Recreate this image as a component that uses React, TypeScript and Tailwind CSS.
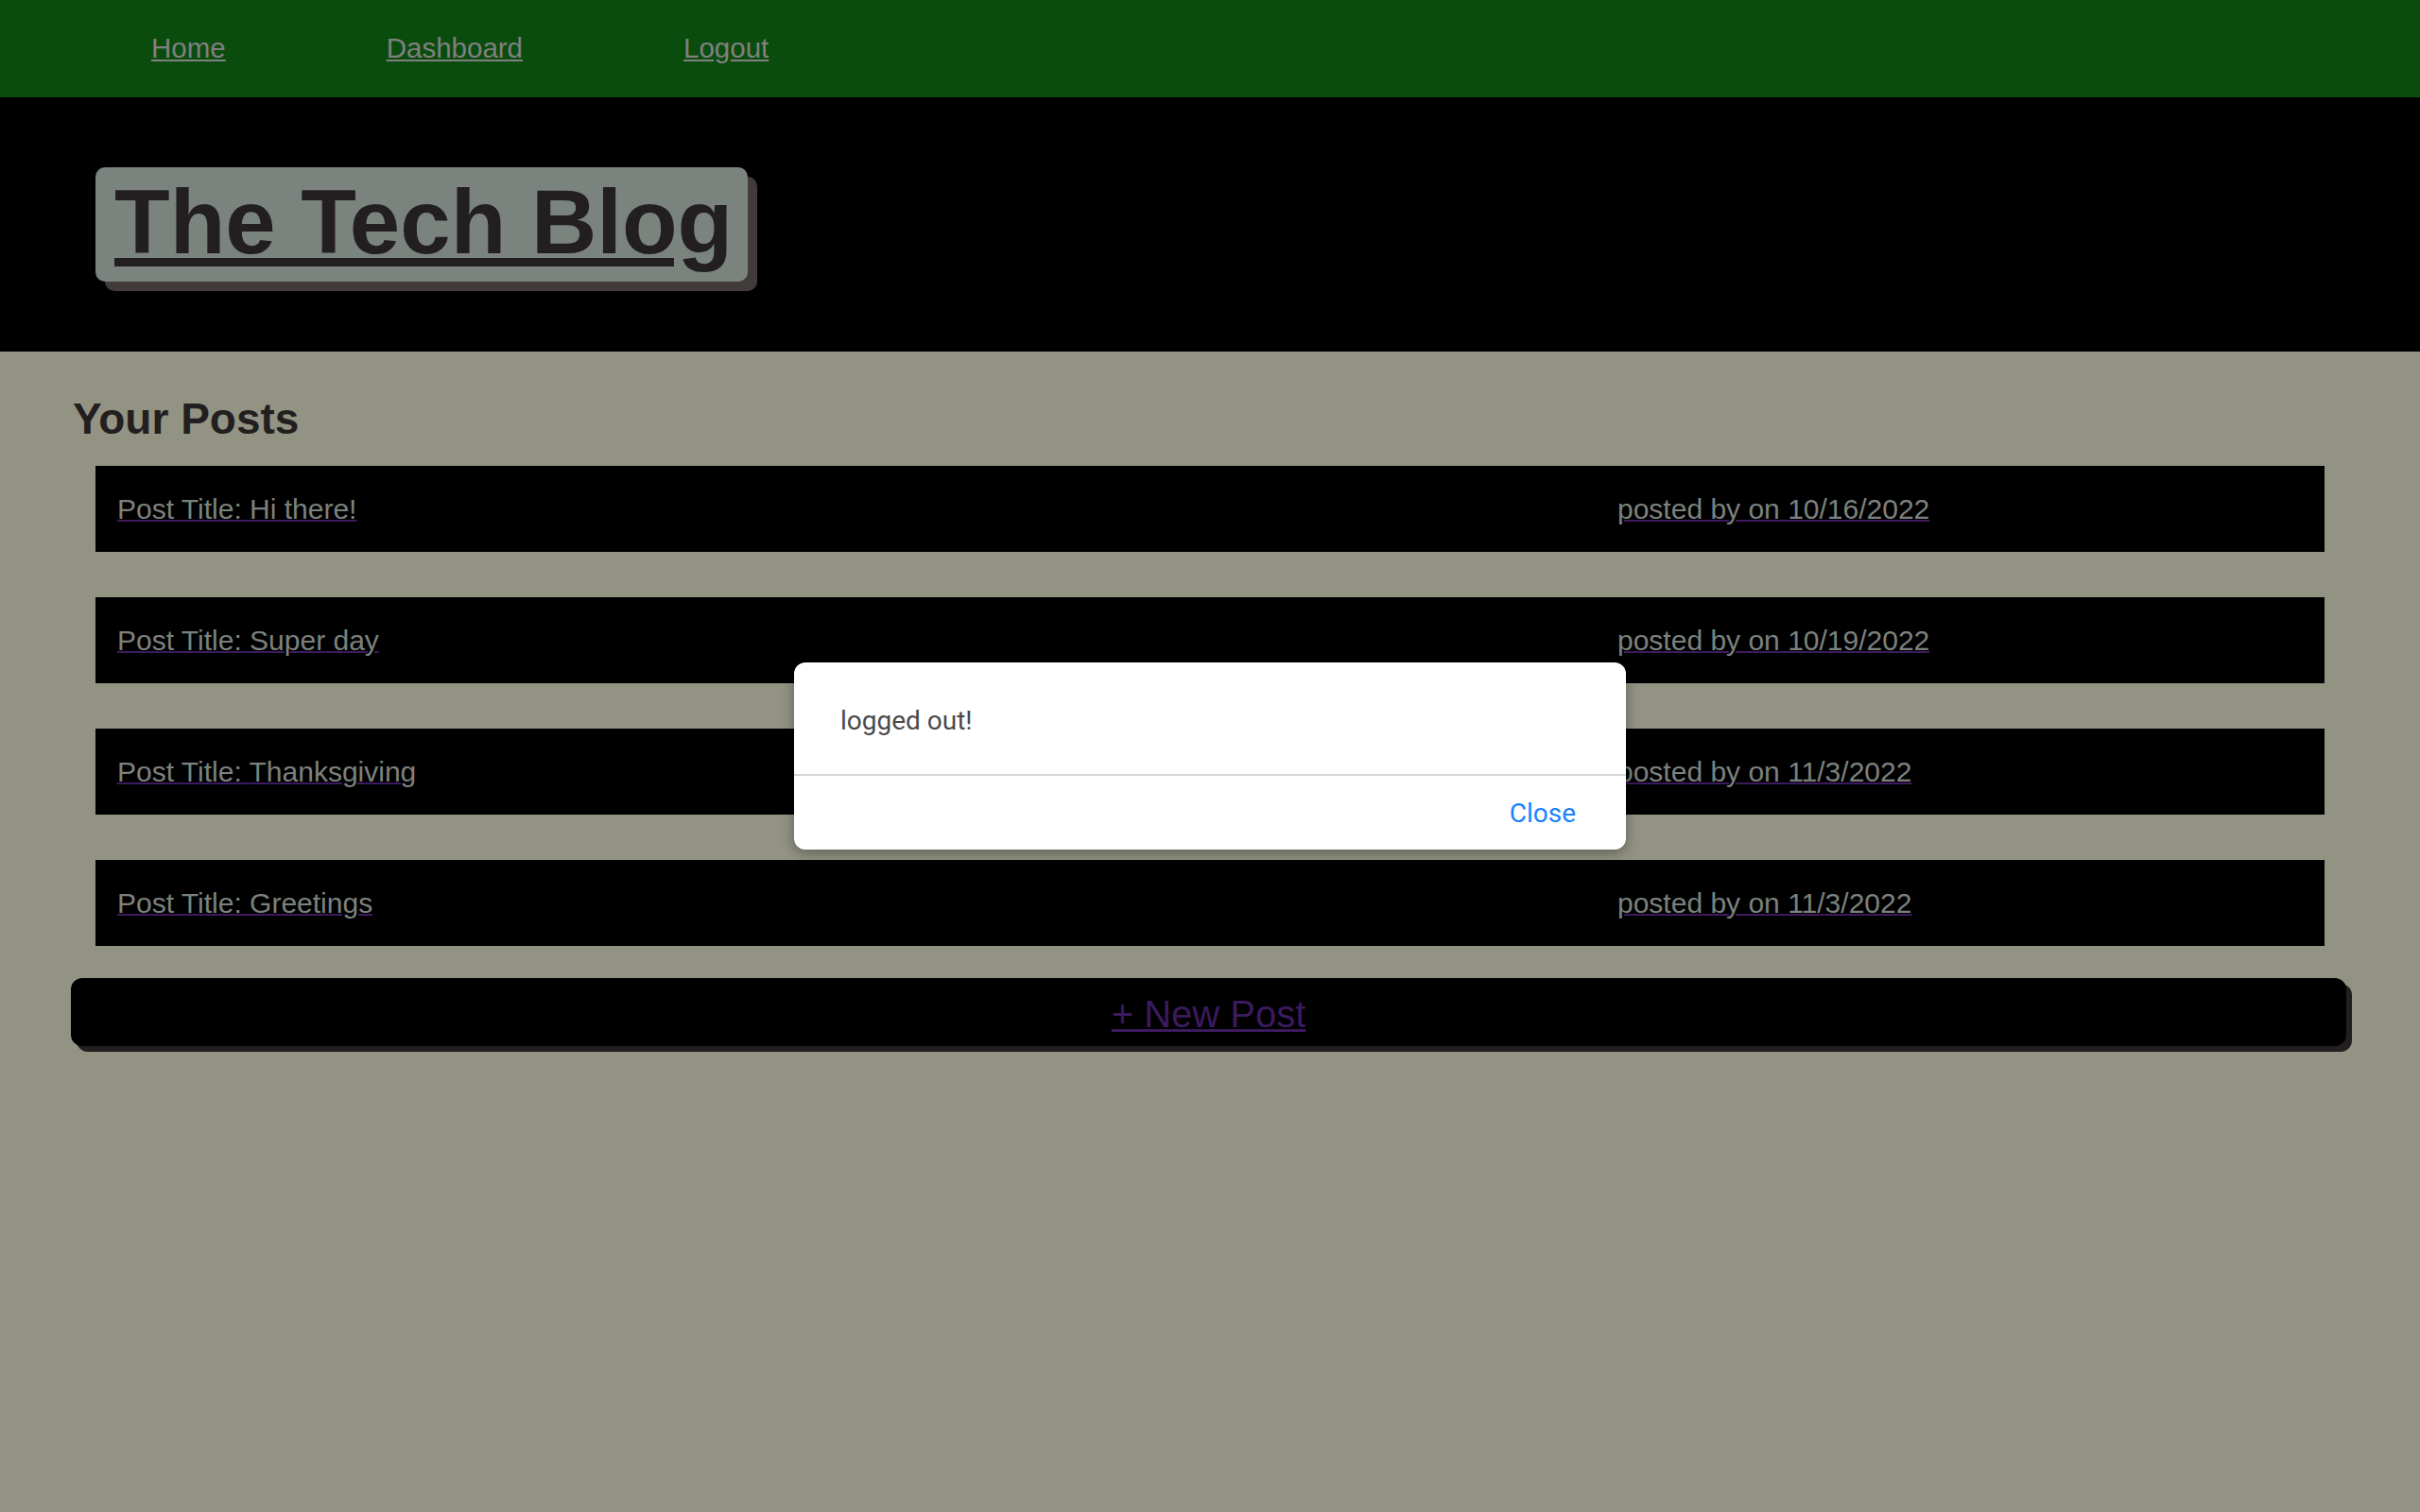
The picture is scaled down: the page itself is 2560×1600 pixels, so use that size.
import React from "react";

const posts = [
  { title: "Hi there!", date: "10/16/2022" },
  { title: "Super day", date: "10/19/2022" },
  { title: "Thanksgiving", date: "11/3/2022" },
  { title: "Greetings", date: "11/3/2022" },
];

export default function App() {
  return (
    <div className="relative min-h-[1600px] bg-[#929383] font-['Liberation_Sans',Arial,sans-serif]">
      {/* nav */}
      <nav className="h-[103px] bg-[#0a4c0e] flex items-center pl-[160px] gap-[170px] text-[29.5px] text-[#808080]">
        <a href="#" className="underline">Home</a>
        <a href="#" className="underline">Dashboard</a>
        <a href="#" className="underline">Logout</a>
      </nav>

      {/* header */}
      <header className="h-[269px] bg-black flex items-center pl-[101px]">
        <div className="bg-[#7a837e] rounded-[10px] shadow-[10px_10px_0_#413b3b] pl-[20px] pr-[16px] pt-[3px] pb-[9px]">
          <a href="#" className="block text-[96px] leading-[109px] font-bold text-[#231f20] underline">
            The Tech Blog
          </a>
        </div>
      </header>

      {/* posts */}
      <main className="pt-[45px]">
        <h2 className="pl-[77px] text-[46px] leading-[52px] font-bold text-[#231f20]">Your Posts</h2>
        <div className="mt-[24px] flex flex-col gap-[48px]">
          {posts.map((p) => (
            <div
              key={p.title}
              className="ml-[101px] w-[2358px] h-[91px] bg-black grid grid-cols-[1610px_1fr] items-center pl-[23px] text-[30px] text-[#7b827e]"
            >
              <a href="#" className="underline decoration-[#3d1a5e] decoration-2">Post Title: {p.title}</a>
              <a href="#" className="underline decoration-[#3d1a5e] decoration-2 -ml-[23px]">
                posted by on {p.date}
              </a>
            </div>
          ))}
        </div>
        <div className="mt-[34px] ml-[75px] w-[2407px] h-[72px] bg-black rounded-[12px] shadow-[6px_6px_0_#231f20] flex items-center justify-center pt-[3px]">
          <a href="#" className="text-[40px] text-[#3b1a5e] underline decoration-[3px]">+ New Post</a>
        </div>
      </main>

      {/* alert */}
      <div className="absolute left-[840px] top-[701px] w-[880px] bg-white rounded-[12px] shadow-[0_4px_14px_rgba(0,0,0,0.35)] font-['Roboto',sans-serif]">
        <div className="h-[118px] flex items-center pl-[49px] pt-[6px] text-[28px] text-[#4a4a4a]">logged out!</div>
        <div className="h-[2px] bg-[#d6d6d6]" />
        <div className="h-[78px] flex items-center justify-end pr-[53px] pt-[2px]">
          <button className="text-[28px] font-normal text-[#1a82fb]">Close</button>
        </div>
      </div>
    </div>
  );
}
